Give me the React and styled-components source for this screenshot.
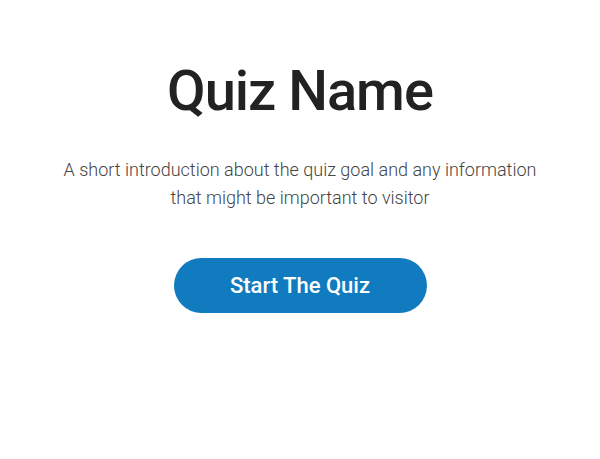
import styled, { createGlobalStyle } from "styled-components";

const GlobalStyle = createGlobalStyle`
  body {
    margin: 0;
    background: #fff;
    font-family: Roboto, "Liberation Sans", sans-serif;
  }
`;

const App = () => {
  return (
    <>
      <GlobalStyle />
      <Intro>
        <Title>Quiz Name</Title>
        <Description>
          A short introduction about the quiz goal and any information
          <br />
          that might be important to visitor
        </Description>
        <StartButton>Start The Quiz</StartButton>
      </Intro>
    </>
  );
};

// intro screen
const Intro = styled.div`
  display: flex;
  flex-direction: column;
  align-items: center;
  padding-top: 55px;
  text-align: center;
`;

// title
const Title = styled.h1`
  margin: 0;
  font-size: 56px;
  font-weight: 500;
  letter-spacing: -1px;
  line-height: 72px;
  color: #222;
`;

// description
const Description = styled.p`
  margin: 29px 0 0;
  font-size: 18px;
  font-weight: 300;
  line-height: 28px;
  color: #444;
`;

// start button
const StartButton = styled.button`
  margin-top: 46px;
  width: 253px;
  height: 55px;
  border: none;
  border-radius: 28px;
  background-color: #117bbf;
  color: #fff;
  font-family: Roboto, "Liberation Sans", sans-serif;
  font-size: 22px;
  font-weight: 500;
  cursor: pointer;
`;

export default App;
